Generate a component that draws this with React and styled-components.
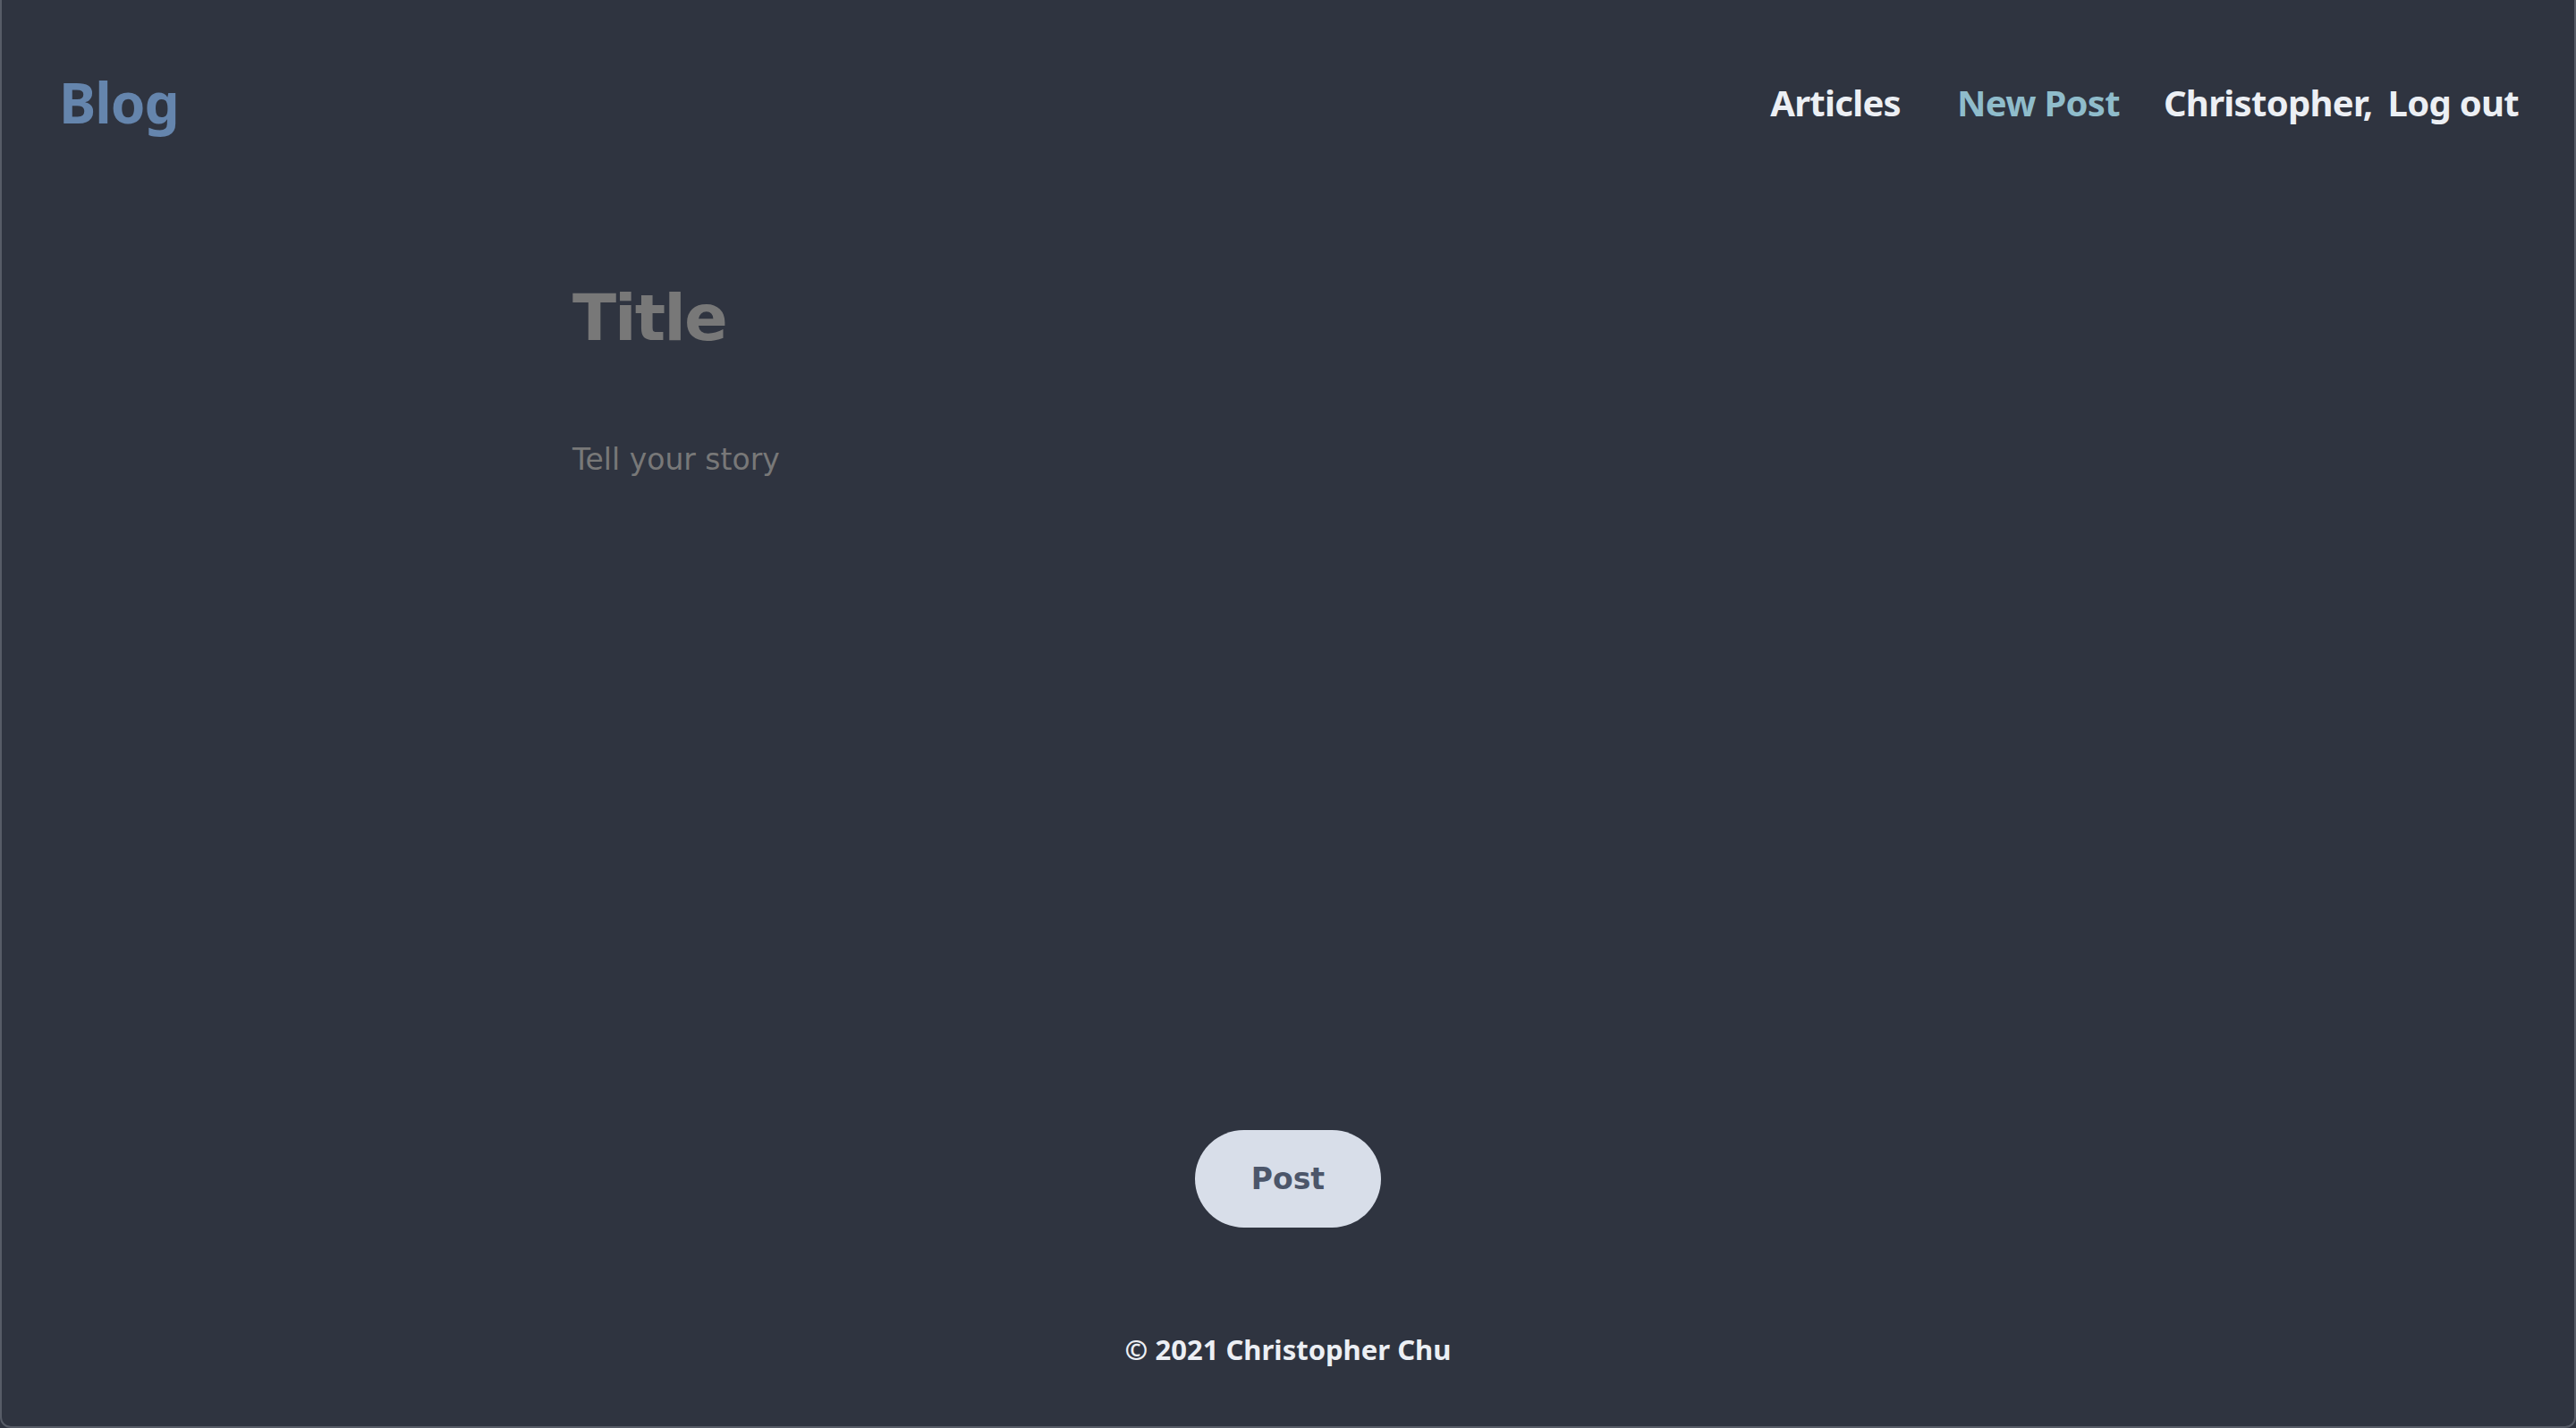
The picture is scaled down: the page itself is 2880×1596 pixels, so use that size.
import React from 'react';
import styled, { createGlobalStyle } from 'styled-components';

const colors = {
  bg: '#2f3440',
  frame: '#575c67',
  blue: '#6585ad',
  frost: '#8fbccb',
  snow: '#eceff4',
  muted: '#787878',
  button: '#d8dee9',
  buttonText: '#4c566a',
};

const GlobalStyle = createGlobalStyle`
  html, body {
    margin: 0;
    padding: 0;
    background: ${colors.bg};
  }

  * {
    box-sizing: border-box;
  }
`;

const App = () => {
  return (
    <>
      <GlobalStyle />
      <Frame>
        <Header>
          <Logo>Blog</Logo>
          <Nav>
            <NavLink>Articles</NavLink>
            <NavLink $active>New Post</NavLink>
            <User>
              <NavLink>Christopher,</NavLink>
              <NavLink>Log out</NavLink>
            </User>
          </Nav>
        </Header>
        <Editor>
          <TitleField>Title</TitleField>
          <StoryField>Tell your story</StoryField>
        </Editor>
        <Actions>
          <PostButton>Post</PostButton>
        </Actions>
        <Footer>© 2021 Christopher Chu</Footer>
      </Frame>
    </>
  );
};

const Frame = styled.div`
  display: flex;
  flex-direction: column;
  height: 100vh;
  border: 2px solid ${colors.frame};
  border-top: none;
  border-radius: 0 0 12px 12px;
  background: ${colors.bg};
  font-family: 'Noto Sans', 'DejaVu Sans', sans-serif;
`;

const Header = styled.header`
  display: flex;
  align-items: center;
  justify-content: space-between;
  height: 228px;
  padding: 0 62px 0 64px;
`;

const Logo = styled.a`
  color: ${colors.blue};
  font-size: 62px;
  font-weight: 700;
  letter-spacing: -1px;
  cursor: pointer;
`;

const Nav = styled.nav`
  display: flex;
  align-items: center;
  gap: 63px;
`;

const User = styled.div`
  display: flex;
  align-items: center;
  gap: 17px;
  margin-left: -14px;
`;

const NavLink = styled.a`
  color: ${({ $active }) => ($active ? colors.frost : colors.snow)};
  font-size: 40px;
  font-weight: 700;
  letter-spacing: -0.7px;
  cursor: pointer;
`;

const Editor = styled.main`
  display: flex;
  flex: 1;
  flex-direction: column;
  width: 1600px;
  margin: 0 auto;
  padding-top: 84px;
`;

const TitleField = styled.div`
  color: ${colors.muted};
  font-family: 'DejaVu Sans', Verdana, sans-serif;
  font-size: 72px;
  font-weight: 700;
  letter-spacing: -2px;
  line-height: 1.2;
`;

const StoryField = styled.div`
  margin-top: 93px;
  color: ${colors.muted};
  font-family: 'DejaVu Sans', Verdana, sans-serif;
  font-size: 33px;
  line-height: 1.4;
`;

const Actions = styled.div`
  display: flex;
  justify-content: center;
`;

const PostButton = styled.button`
  width: 208px;
  height: 109px;
  border: none;
  border-radius: 55px;
  background: ${colors.button};
  color: ${colors.buttonText};
  font-family: 'DejaVu Sans', Verdana, sans-serif;
  font-size: 33px;
  font-weight: 700;
  cursor: pointer;
`;

const Footer = styled.footer`
  padding: 115px 0 65px;
  color: ${colors.snow};
  font-size: 31px;
  font-weight: 700;
  text-align: center;
`;

export default App;
